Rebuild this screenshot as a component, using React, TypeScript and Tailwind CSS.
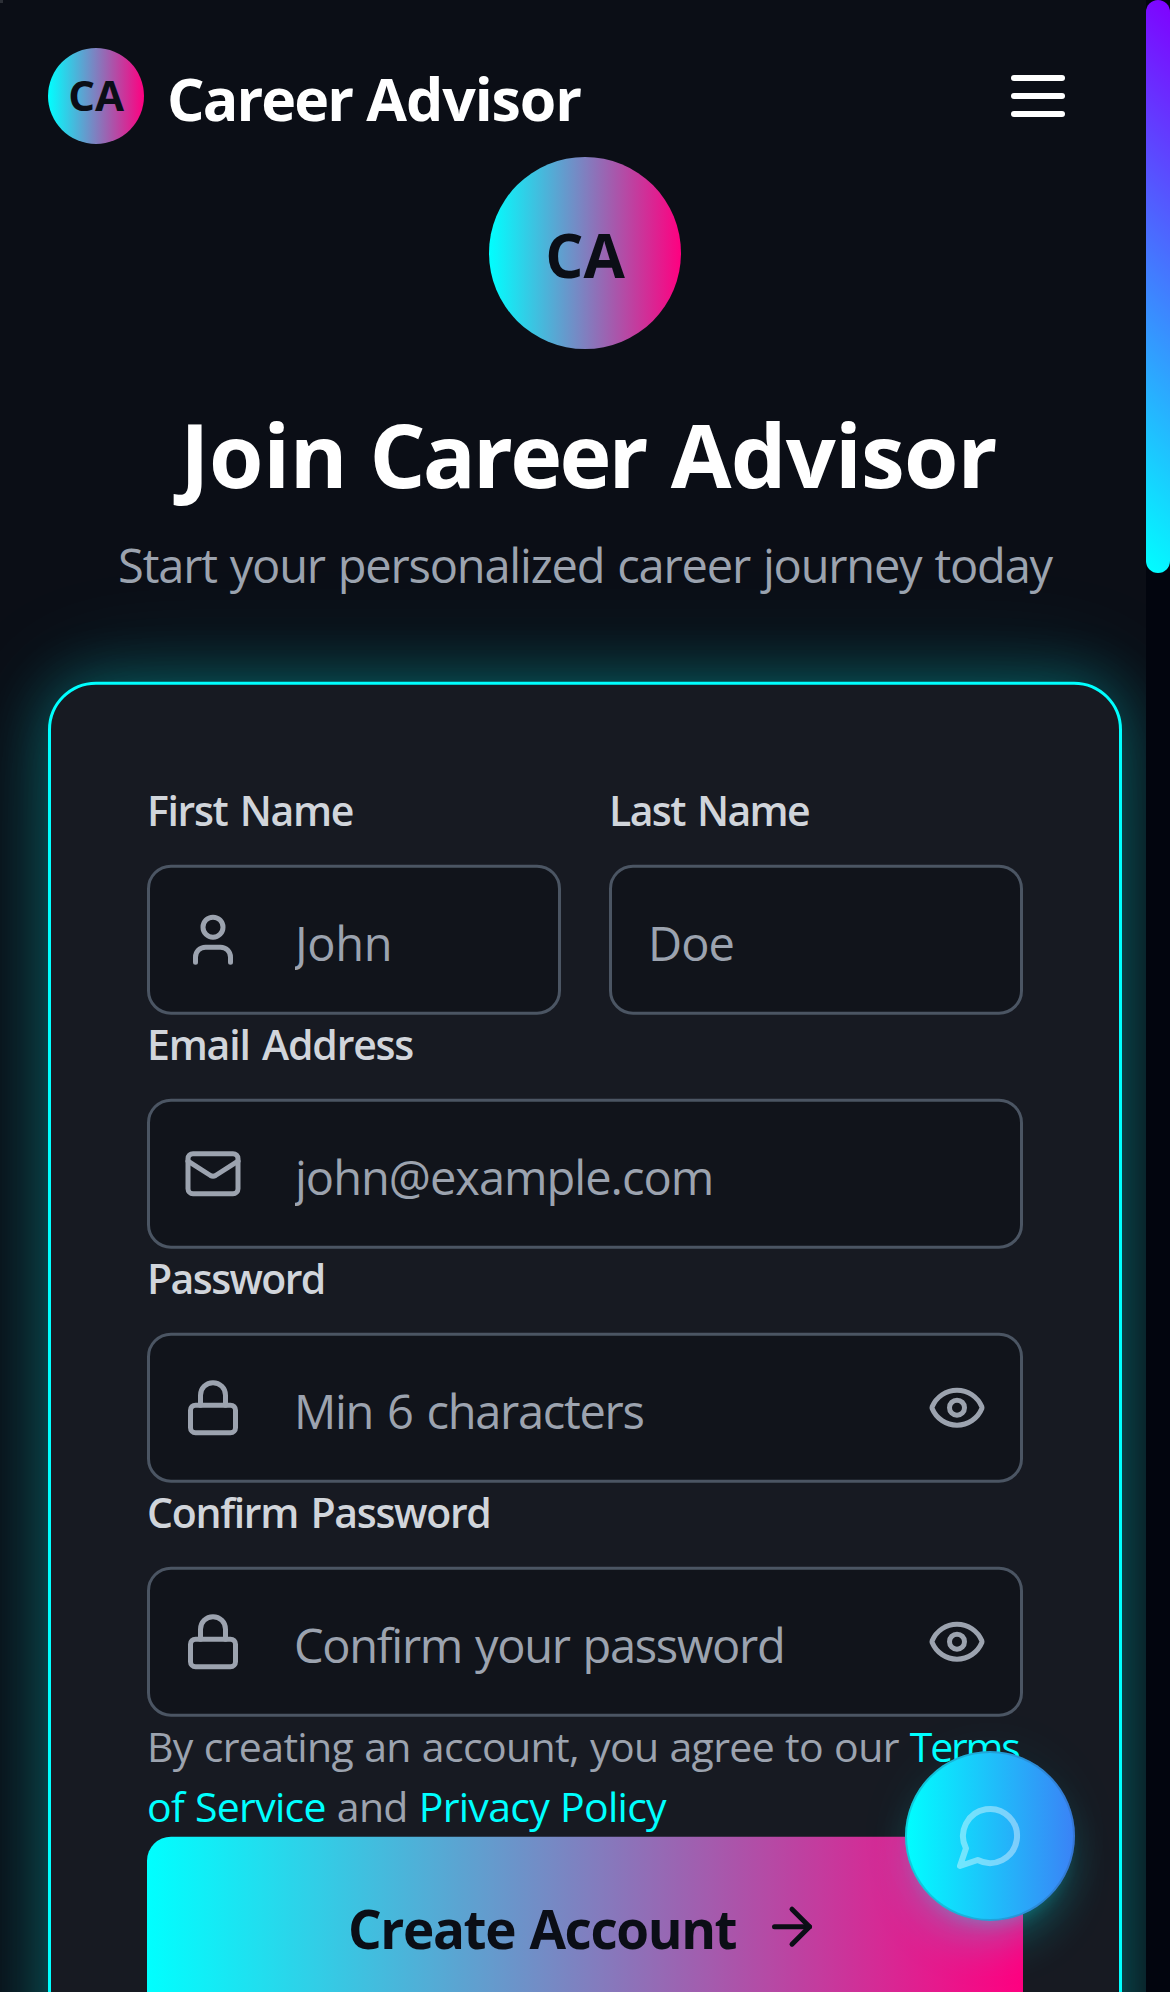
import { ArrowRight, Eye, Lock, Mail, User, type LucideIcon } from "lucide-react";

type FieldProps = {
  label: string;
  labelClass: string;
  placeholder: string;
  inputClass: string;
  icon?: LucideIcon;
  reveal?: boolean;
};

function Field({ label, labelClass, placeholder, inputClass, icon: Icon, reveal }: FieldProps) {
  return (
    <div className="min-w-0">
      <label
        className={`mb-[26px] block text-[41px] leading-[58px] font-semibold [word-spacing:3px] text-[#d1d5db] ${labelClass}`}
      >
        {label}
      </label>
      <div className="relative flex h-[150px] items-center">
        <input
          placeholder={placeholder}
          className={`h-full w-full rounded-[24px] border-[3px] border-[#4b5563] bg-[#11141b] pt-[5px] pr-[36px] text-[47px] text-white outline-none placeholder:text-[#9ca3af] ${inputClass}`}
        />
        {Icon && <Icon className="absolute left-[36px] size-[60px] text-[#9ca3af]" />}
        {reveal && (
          <button className="absolute right-[36px]" aria-label="Show password">
            <Eye className="size-[60px] text-[#9ca3af]" />
          </button>
        )}
      </div>
    </div>
  );
}

function Header() {
  return (
    <header className="flex h-[144px] items-end justify-between pr-[105px] pl-[48px]">
      <div className="flex h-[96px] items-center gap-[23px]">
        <div className="flex size-[96px] items-center justify-center rounded-full bg-[linear-gradient(90deg,#00ffff,#ff0080)] pb-[4px] text-[42px] font-bold text-[#0b0e16]">
          CA
        </div>
        <span className="pt-[4px] text-[59px] leading-[84px] font-bold tracking-[-1.1px] text-white">
          <span className="tracking-[-1.9px]">Career</span> Advisor
        </span>
      </div>
      <button className="flex h-[96px] flex-col justify-center gap-[12px]" aria-label="Menu">
        <span className="h-[6px] w-[54px] rounded-[3px] bg-white" />
        <span className="h-[6px] w-[54px] rounded-[3px] bg-white" />
        <span className="h-[6px] w-[54px] rounded-[3px] bg-white" />
      </button>
    </header>
  );
}

export default function App() {
  return (
    <div className="relative h-[1992px] w-[1170px] overflow-hidden bg-[#0b0e16] font-['Open_Sans',sans-serif]">
      <div className="absolute top-0 left-0 size-[3px] bg-[#2c2f36]" />
      <Header />
      <main className="px-[48px] pt-[13px]">
        <div className="mx-auto flex size-[192px] items-center justify-center rounded-full bg-[linear-gradient(90deg,#00ffff,#ff0080)] pt-[3px] text-[60px] font-bold text-[#0b0e16]">
          CA
        </div>
        <h1 className="mt-[51px] pl-[7px] text-center text-[88px] leading-[108px] font-bold tracking-[-0.8px] whitespace-nowrap text-white">
          <span className="tracking-[-0.3px]">Join</span> <span className="tracking-[-2.8px]">Career</span>{" "}
          <span className="pl-[3px]">Advisor</span>
        </h1>
        <p className="mt-[21px] text-center text-[47px] leading-[72px] tracking-[-1.2px] whitespace-nowrap [word-spacing:2px] text-[#9ca3af]">
          Start your personalized career journey today
        </p>

        <form className="mt-[81px] h-[1500px] -translate-y-[0.33px] rounded-[48px] border-[3px] border-[#00ffff] bg-[#171a22] p-[96px] shadow-[0_0_60px_rgba(0,255,255,0.28),0_0_120px_rgba(0,255,255,0.14)]">
          <div className="grid grid-cols-2 gap-[48px]">
            <Field
              label="First Name"
              labelClass="tracking-[-1.35px]"
              placeholder="John"
              icon={User}
              inputClass="pl-[145px] tracking-[-0.3px]"
            />
            <Field
              label="Last Name"
              labelClass="tracking-[-1.6px]"
              placeholder="Doe"
              inputClass="pl-[36px] tracking-[-0.9px]"
            />
          </div>
          <Field
            label="Email Address"
            labelClass="tracking-[-1.2px]"
            placeholder="john@example.com"
            icon={Mail}
            inputClass="pl-[145px] tracking-[-1px]"
          />
          <Field
            label="Password"
            labelClass="tracking-[-1.6px]"
            placeholder="Min 6 characters"
            icon={Lock}
            reveal
            inputClass="pl-[144px] tracking-[-1.3px] [word-spacing:3px]"
          />
          <Field
            label="Confirm Password"
            labelClass="tracking-[-1.3px]"
            placeholder="Confirm your password"
            icon={Lock}
            reveal
            inputClass="pl-[144px] tracking-[-1.3px] [word-spacing:2px]"
          />
          <p className="-mt-px mb-px text-[41px] leading-[60px] tracking-[-0.7px] whitespace-nowrap [word-spacing:1px] text-[#9ca3af]">
            <span className="tracking-[-0.64px]">By creating an account, you agree to our </span>
            <a className="tracking-[-2.2px] text-[#00ffff]">Terms</a>
            <br />
            <a className="text-[#00ffff]">of Service</a> and <a className="text-[#00ffff]">Privacy Policy</a>
          </p>
          <button className="flex h-[180px] w-full items-center justify-center gap-[24px] rounded-[24px] bg-[linear-gradient(90deg,#00ffff,#ff0080)] text-[#0b0e16]">
            <span className="w-[390px] pt-[3px] text-left text-[53px] font-bold tracking-[-1.4px] whitespace-nowrap [word-spacing:2px]">
              Create Account
            </span>
            <ArrowRight className="size-[60px]" />
          </button>
        </form>
      </main>

      <button
        aria-label="Open chat"
        className="absolute top-[1751px] left-[905px] flex size-[170px] items-center justify-center rounded-full bg-[linear-gradient(90deg,#00ffff,#3b82f6)] shadow-[0_30px_45px_-9px_rgba(0,255,255,0.25),0_12px_18px_-12px_rgba(0,255,255,0.3),0_0_60px_rgba(0,255,255,0.06)] inset-ring-2 inset-ring-[#2c5f8a]/30"
      >
        <svg
          viewBox="0 0 24 24"
          className="size-[72px] opacity-40"
          fill="none"
          stroke="white"
          strokeWidth="2"
          strokeLinecap="round"
          strokeLinejoin="round"
        >
          <path d="M7.9 20A9 9 0 1 0 4 16.1L2 22Z" />
        </svg>
      </button>

      <div className="absolute top-0 right-0 h-full w-[24px] bg-[#02050e]">
        <div className="h-[573px] rounded-[12px] bg-[linear-gradient(45deg,#00ffff,#8000ff)]" />
      </div>
    </div>
  );
}
